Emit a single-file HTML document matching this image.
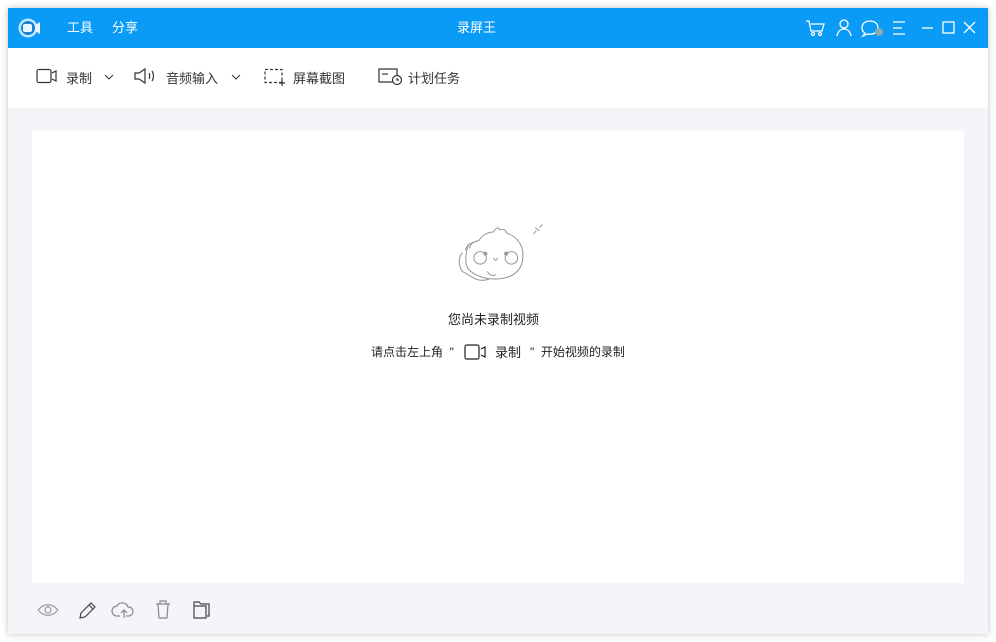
<!DOCTYPE html>
<html><head><meta charset="utf-8"><style>
*{margin:0;padding:0;box-sizing:border-box}
body{width:996px;height:642px;background:#fff;font-family:"Liberation Sans","Noto Sans CJK SC",sans-serif;position:relative;overflow:hidden}
#win{position:absolute;left:8px;top:8px;width:980px;height:626px;background:#f4f5f9;box-shadow:0 0 6px rgba(0,0,0,.25)}
#title{position:absolute;left:0;top:0;width:980px;height:40px;background:#0a9bf7;color:#fff;font-size:13px}
#title span{position:absolute;top:9px}
#tb{position:absolute;left:0;top:40px;width:980px;height:60px;background:#fff;font-size:13px;color:#333}
#tb span{position:absolute;top:20px}
#content{position:absolute;left:24px;top:123px;width:932px;height:452px;background:#fff}
.t{position:absolute;font-size:13px;color:#222;white-space:nowrap}
svg{position:absolute}
</style></head><body>
<div id="win">
<div id="title">
<svg style="left:10px;top:9px" width="24" height="22" viewBox="0 0 24 22"><circle cx="10" cy="11" r="9.5" fill="#bfe6ff"/><circle cx="10" cy="11" r="7" fill="#1a7fd6"/><rect x="5" y="7" width="9" height="8" rx="2" fill="#e6f6ff"/><path d="M17 8l5-3v12l-5-3z" fill="#e6f6ff"/></svg>
<span style="left:59px">工具</span><span style="left:104px">分享</span>
<span style="left:449px">录屏王</span>
<svg style="left:797px;top:10px" width="180" height="20" viewBox="0 0 180 20" fill="none" stroke="#fff" stroke-width="1.3">
<path d="M1 3h3l2 10h11l2-7H6"/><circle cx="8" cy="16" r="1.5"/><circle cx="15" cy="16" r="1.5"/>
<circle cx="39" cy="6" r="4"/><path d="M32 18c1-5 4-7 7-7s6 2 7 7"/>
<path d="M60 15l-2 3 4-2c5 1 11-1 11-6s-4-7-8-7-8 2-8 7c0 2 1 4 3 5"/>
<circle cx="74" cy="14" r="4" fill="#8aa" stroke="none"/>
<path d="M88 4h12M88 10h9M88 16h12"/>
<path d="M117 10h11"/><rect x="138" y="4" width="11" height="11"/><path d="M159 4l11 11M170 4l-11 11"/>
</svg>
</div>
<div id="tb">
<svg style="left:28px;top:20px" width="22" height="16" viewBox="0 0 22 16" fill="none" stroke="#333" stroke-width="1.2"><rect x="1" y="1.5" width="14" height="13" rx="2"/><path d="M16 5l4-2v10l-4-2"/></svg>
<span style="left:58px">录制</span>
<svg style="left:96px;top:26px" width="10" height="6" fill="none" stroke="#333"><path d="M1 1l4 4 4-4"/></svg>
<svg style="left:126px;top:20px" width="24" height="16" viewBox="0 0 24 16" fill="none" stroke="#333" stroke-width="1.2"><path d="M1 5h4l6-4v14l-6-4H1z"/><path d="M15 5c1 2 1 4 0 6M18 3c2 3 2 7 0 10"/></svg>
<span style="left:158px">音频输入</span>
<svg style="left:223px;top:26px" width="10" height="6" fill="none" stroke="#333"><path d="M1 1l4 4 4-4"/></svg>
<svg style="left:256px;top:20px" width="22" height="18" viewBox="0 0 22 18" fill="none" stroke="#333" stroke-width="1.2" ><rect x="1" y="1.5" width="17" height="13" stroke-dasharray="3 2"/><path d="M18 12v6M15 15h6"/></svg>
<span style="left:285px">屏幕截图</span>
<svg style="left:370px;top:20px" width="26" height="18" viewBox="0 0 26 18" fill="none" stroke="#333" stroke-width="1.2"><path d="M16 14H1V1h18v7"/><path d="M4 6h6"/><circle cx="19" cy="12" r="4.5" fill="#fff"/><path d="M19 10v2h2"/></svg>
<span style="left:400px">计划任务</span>
</div>
<div id="content">
<svg style="left:420px;top:90px" width="100" height="80" viewBox="0 0 96 76" fill="none" stroke="#999" stroke-width="1">
<path d="M26 18c4-6 10-8 14-8 2-4 4-5 6-2 3-1 6 0 6 3 10 3 17 12 16 23 0 12-9 20-22 21-10 1-20-1-28-7-7-5-5-18-2-26z"/>
<path d="M10 30c-5 6-3 14 0 18l12 7c5 2 10 2 14 0"/><path d="M34 48c2 4 6 5 8 3"/>
<circle cx="27" cy="35" r="6"/><circle cx="57" cy="35" r="6"/>
<circle cx="32" cy="31" r="1.5" fill="#999"/><circle cx="52" cy="31" r="1.5" fill="#999"/>
<path d="M40 35c1 3 3 3 4 0"/><path d="M16 22c-2 2-3 4-3 6M20 20c-2 2-3 4-3 6"/>
<path d="M78 12l3-3M84 6l3-3M80 6l4 3"/>
</svg>
<div class="t" style="left:416px;top:178px">您尚未录制视频</div>
<div class="t" style="left:339px;top:212px;font-size:12px">请点击左上角&nbsp;&nbsp;"</div>
<svg style="left:432px;top:213px" width="24" height="16" viewBox="0 0 24 16" fill="none" stroke="#222" stroke-width="1.2"><rect x="1" y="1" width="14" height="14" rx="2"/><path d="M17 5l4-2v10l-4-2"/></svg>
<div class="t" style="left:463px;top:211px">录制</div>
<div class="t" style="left:498px;top:212px;font-size:12px">"&nbsp;&nbsp;开始视频的录制</div>
</div>
<svg style="left:28px;top:590px" width="190" height="24" viewBox="0 0 190 24" fill="none" stroke-width="1.2">
<path d="M2 12c6-7 14-7 20 0-6 7-14 7-20 0z" stroke="#999"/><circle cx="12" cy="12" r="3" stroke="#999"/>
<path d="M44 20l1-5 10-10 4 4-10 10z M53 7l4 4" stroke="#444"/>
<path d="M84 18h-3a5 5 0 010-10 6 6 0 0111 1 4 4 0 011 9h-3M88 20v-7M85 15l3-3 3 3" stroke="#888"/>
<path d="M120 6h14M124 6V3h6v3M122 6l1 14h8l1-14" stroke="#888"/>
<path d="M158 8V4h5l2 2h8v12h-2M158 8h12v12h-12z" stroke="#444"/>
</svg>
</div>
</body></html>
